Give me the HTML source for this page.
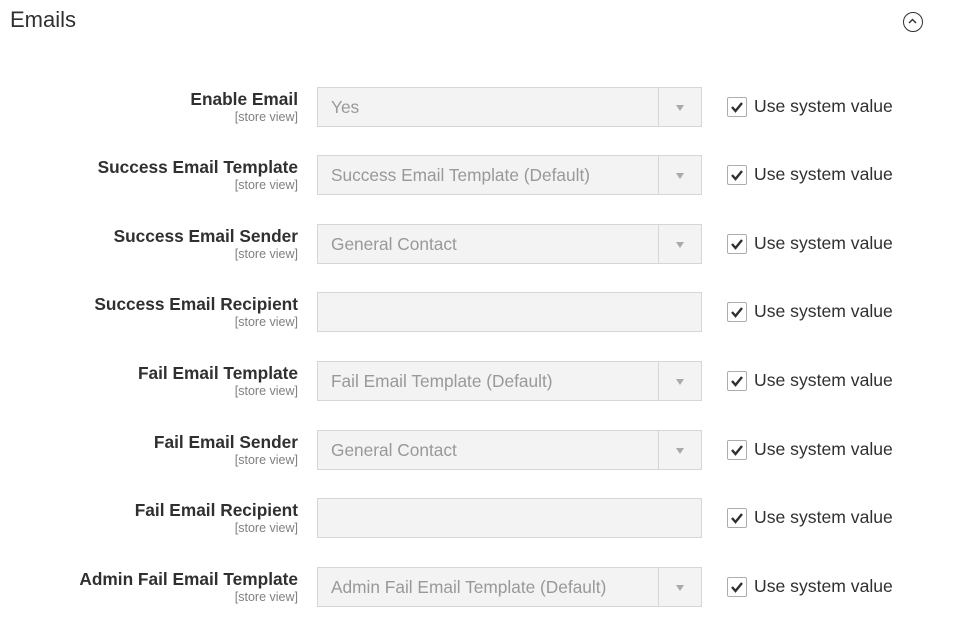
<!DOCTYPE html>
<html><head><style>
body{margin:0;width:959px;height:625px;background:#fff;font-family:"Liberation Sans",sans-serif;position:relative;overflow:hidden}
.t{position:absolute;left:10px;top:7px;font-size:22px;color:#303030}
.ic{position:absolute;left:903px;top:12px;width:20px;height:20px;border:1.5px solid #303030;border-radius:50%;box-sizing:border-box}
.row{position:absolute;left:0;width:959px;height:41px}
.lb{position:absolute;right:661px;top:2px;text-align:right;font-size:17.3px;font-weight:bold;color:#303030;white-space:nowrap}
.sv{position:absolute;right:661px;top:23px;font-size:12.5px;color:#808080;white-space:nowrap}
.sel{position:absolute;left:317px;top:0;width:385px;height:40px;box-sizing:border-box;border:1px solid #d6d6d6;background:#f3f3f3;color:#999;font-size:17.3px;line-height:38px;padding-left:13px}
.ar{position:absolute;right:0;top:0;width:42px;height:38px;border-left:1px solid #d6d6d6}
.ar:after{content:"";position:absolute;left:17px;top:17px;border-left:4px solid transparent;border-right:4px solid transparent;border-top:6px solid #aaa}
.cb{position:absolute;left:727px;top:10px;width:20px;height:20px;box-sizing:border-box;border:1px solid #adadad;border-radius:2px;background:#fff}
.cl{position:absolute;left:754px;top:9px;font-size:17.6px;color:#303030}
</style></head><body>
<div class="t">Emails</div>
<div class="ic"><svg width="17" height="17" style="position:absolute;left:0;top:0"><path d="M5 10 L8.5 6.5 L12 10" fill="none" stroke="#303030" stroke-width="1.4"/></svg></div>

<div class="row" style="top:87px"><div class="lb">Enable Email</div><div class="sv">[store view]</div><div class="sel">Yes<div class="ar"></div></div><div class="cb"><svg width="18" height="18"><path d="M4 9 L7.5 13 L14 5" fill="none" stroke="#303030" stroke-width="2.4"/></svg></div><div class="cl">Use system value</div></div>
<div class="row" style="top:155px"><div class="lb">Success Email Template</div><div class="sv">[store view]</div><div class="sel">Success Email Template (Default)<div class="ar"></div></div><div class="cb"><svg width="18" height="18"><path d="M4 9 L7.5 13 L14 5" fill="none" stroke="#303030" stroke-width="2.4"/></svg></div><div class="cl">Use system value</div></div>
<div class="row" style="top:224px"><div class="lb">Success Email Sender</div><div class="sv">[store view]</div><div class="sel">General Contact<div class="ar"></div></div><div class="cb"><svg width="18" height="18"><path d="M4 9 L7.5 13 L14 5" fill="none" stroke="#303030" stroke-width="2.4"/></svg></div><div class="cl">Use system value</div></div>
<div class="row" style="top:292px"><div class="lb">Success Email Recipient</div><div class="sv">[store view]</div><div class="sel"></div><div class="cb"><svg width="18" height="18"><path d="M4 9 L7.5 13 L14 5" fill="none" stroke="#303030" stroke-width="2.4"/></svg></div><div class="cl">Use system value</div></div>
<div class="row" style="top:361px"><div class="lb">Fail Email Template</div><div class="sv">[store view]</div><div class="sel">Fail Email Template (Default)<div class="ar"></div></div><div class="cb"><svg width="18" height="18"><path d="M4 9 L7.5 13 L14 5" fill="none" stroke="#303030" stroke-width="2.4"/></svg></div><div class="cl">Use system value</div></div>
<div class="row" style="top:430px"><div class="lb">Fail Email Sender</div><div class="sv">[store view]</div><div class="sel">General Contact<div class="ar"></div></div><div class="cb"><svg width="18" height="18"><path d="M4 9 L7.5 13 L14 5" fill="none" stroke="#303030" stroke-width="2.4"/></svg></div><div class="cl">Use system value</div></div>
<div class="row" style="top:498px"><div class="lb">Fail Email Recipient</div><div class="sv">[store view]</div><div class="sel"></div><div class="cb"><svg width="18" height="18"><path d="M4 9 L7.5 13 L14 5" fill="none" stroke="#303030" stroke-width="2.4"/></svg></div><div class="cl">Use system value</div></div>
<div class="row" style="top:567px"><div class="lb">Admin Fail Email Template</div><div class="sv">[store view]</div><div class="sel">Admin Fail Email Template (Default)<div class="ar"></div></div><div class="cb"><svg width="18" height="18"><path d="M4 9 L7.5 13 L14 5" fill="none" stroke="#303030" stroke-width="2.4"/></svg></div><div class="cl">Use system value</div></div>
</body></html>
